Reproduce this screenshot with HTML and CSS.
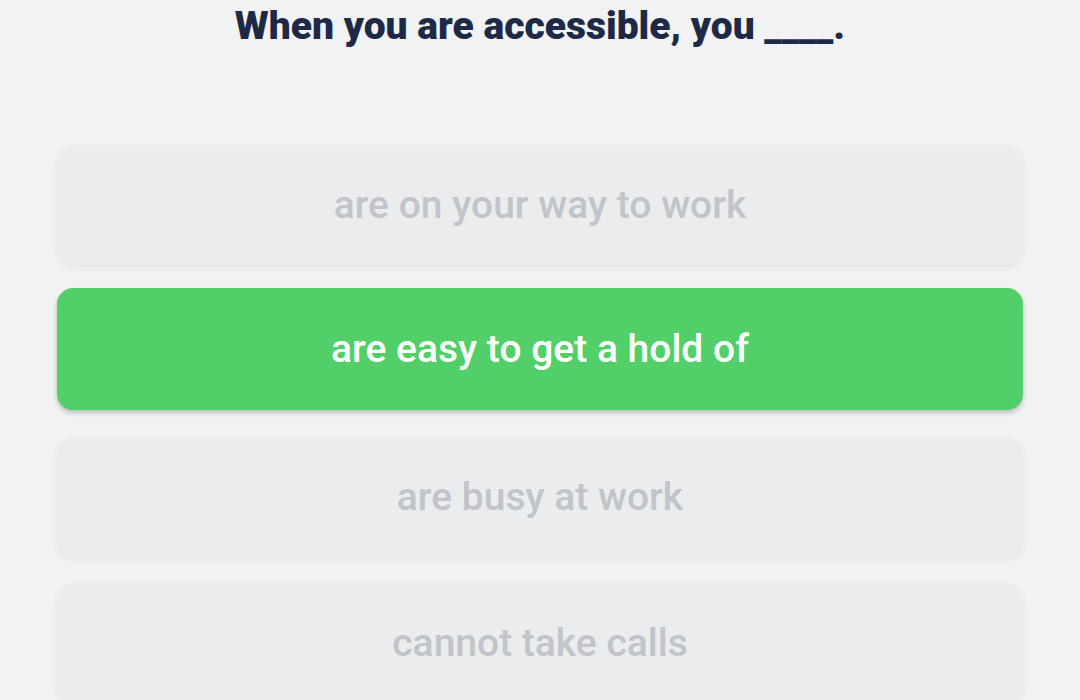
FILE: index.html
```html
<!DOCTYPE html>
<html>
<head>
<meta charset="utf-8">
<link rel="stylesheet" href="styles.css">
</head>
<body>
<main class="quiz">
  <h1 class="question">When you are accessible, you ____.</h1>
  <div class="options">
    <div class="option">are on your way to work</div>
    <div class="option option--selected">are easy to get a hold of</div>
    <div class="option">are busy at work</div>
    <div class="option">cannot take calls</div>
  </div>
</main>
</body>
</html>
```
FILE: styles.css
```css
html, body {
  margin: 0;
  padding: 0;
  background: #f0f2f4;
  height: 100%;
  overflow: hidden;
}
.quiz {
  font-family: Roboto, "Liberation Sans", sans-serif;
  padding: 0 57px;
  display: flex;
  flex-direction: column;
}
.question {
  margin: 0;
  padding-top: 4px;
  font-size: 39px;
  font-weight: 900;
  line-height: 44px;
  color: #1e2a45;
  text-align: center;
}
.options {
  margin-top: 97px;
  display: flex;
  flex-direction: column;
  gap: 26px;
}
.option {
  height: 120px;
  border-radius: 16px;
  background: #ebecee;
  box-shadow: 0 3px 6px rgba(0, 0, 0, 0.05);
  display: flex;
  align-items: center;
  justify-content: center;
  font-size: 39px;
  font-weight: 500;
  color: #c1c4c9;
}
.option--selected {
  height: 122px;
  margin-top: -3px;
  margin-bottom: 1px;
  background: #52cf68;
  color: #ffffff;
  box-shadow: 0 3px 5px rgba(0, 0, 0, 0.22);
}
```
